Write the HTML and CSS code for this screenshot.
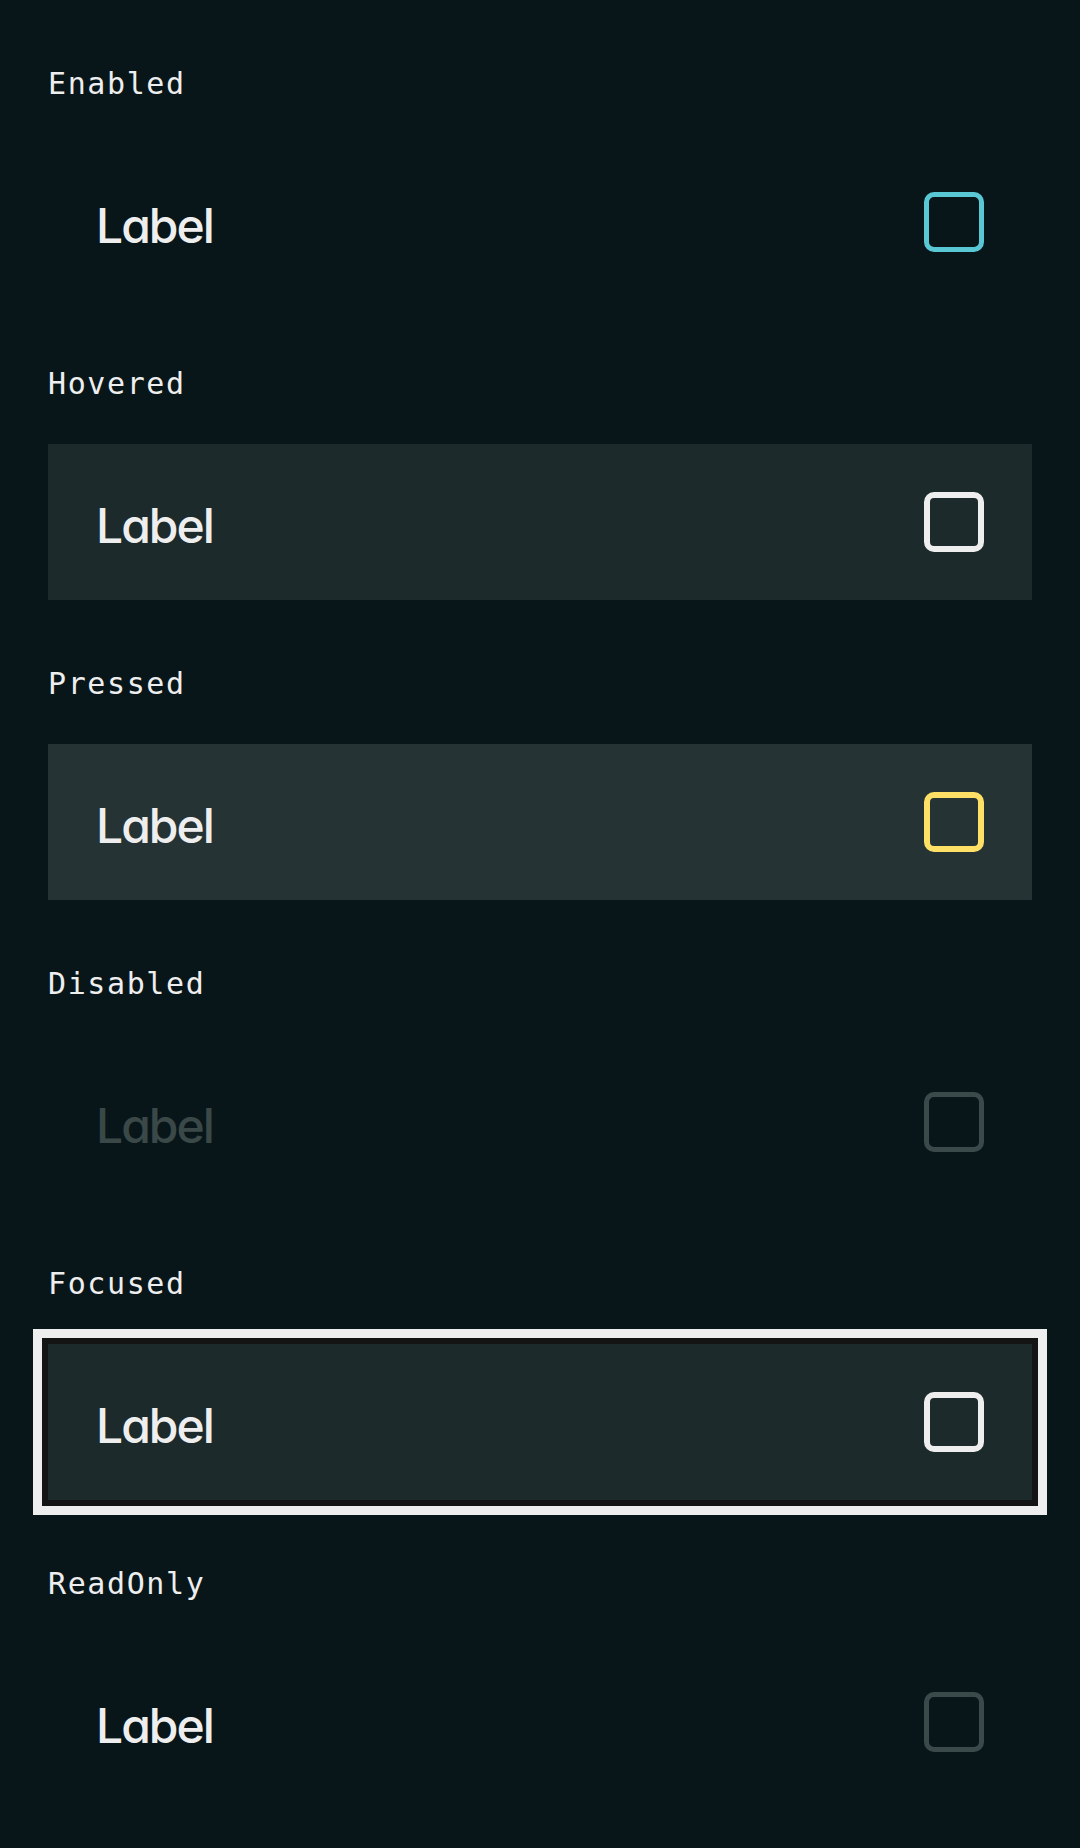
FILE: index.html
```html
<!DOCTYPE html>
<html lang="en">
<head>
<meta charset="utf-8">
<title>Checkbox states</title>
<link rel="stylesheet" href="styles.css">
</head>
<body>
<main class="page">
  <section class="state">
    <div class="state-name">Enabled</div>
    <div class="row">
      <span class="label">Label</span>
      <span class="box box-enabled"></span>
    </div>
  </section>
  <section class="state">
    <div class="state-name">Hovered</div>
    <div class="row row-hovered">
      <span class="label">Label</span>
      <span class="box box-strong"></span>
    </div>
  </section>
  <section class="state">
    <div class="state-name">Pressed</div>
    <div class="row row-pressed">
      <span class="label">Label</span>
      <span class="box box-pressed"></span>
    </div>
  </section>
  <section class="state">
    <div class="state-name">Disabled</div>
    <div class="row">
      <span class="label label-disabled">Label</span>
      <span class="box box-dim"></span>
    </div>
  </section>
  <section class="state">
    <div class="state-name">Focused</div>
    <div class="row row-focused">
      <span class="label">Label</span>
      <span class="box box-strong"></span>
    </div>
  </section>
  <section class="state">
    <div class="state-name">ReadOnly</div>
    <div class="row">
      <span class="label">Label</span>
      <span class="box box-dim"></span>
    </div>
  </section>
</main>
</body>
</html>
```
FILE: styles.css
```css
html, body {
  margin: 0;
  padding: 0;
  background: #08161a;
}

.page {
  width: 1080px;
  min-height: 1848px;
  box-sizing: border-box;
  padding: 0 48px 48px;
  display: flex;
  flex-direction: column;
}

.state {
  display: flex;
  flex-direction: column;
  padding-top: 64px;
  gap: 40px;
}

.state-name {
  font-family: "DejaVu Sans Mono", monospace;
  font-size: 30px;
  line-height: 40px;
  height: 40px;
  letter-spacing: 1.6px;
  color: #eeeeee;
}

.row {
  height: 156px;
  box-sizing: border-box;
  padding: 0 48px;
  display: flex;
  align-items: center;
  justify-content: space-between;
}

.row-hovered { background: #1c2a2b; }
.row-pressed { background: #253335; }
.row-focused {
  background: #1c2a2b;
  outline: 6px solid #141414;
  box-shadow: 0 0 0 15px #eeeeee;
}

.label {
  font-family: "Inter", "Liberation Sans", sans-serif;
  font-feature-settings: "cv11" 1;
  font-size: 48px;
  font-weight: 500;
  line-height: 48px;
  letter-spacing: -2px;
  color: #eeeeee;
  margin-top: 7px;
}

.label-disabled { color: #3a4848; }

.box {
  width: 60px;
  height: 60px;
  box-sizing: border-box;
  border-radius: 10px;
  border: 5px solid #eeeeee;
}

.box-enabled { border-color: #5ac8d4; }
.box-strong { border-width: 6px; border-color: #eeeeee; }
.box-pressed { border-width: 6px; border-color: #ffe066; }
.box-dim { border-color: #3a4a4a; }
```
